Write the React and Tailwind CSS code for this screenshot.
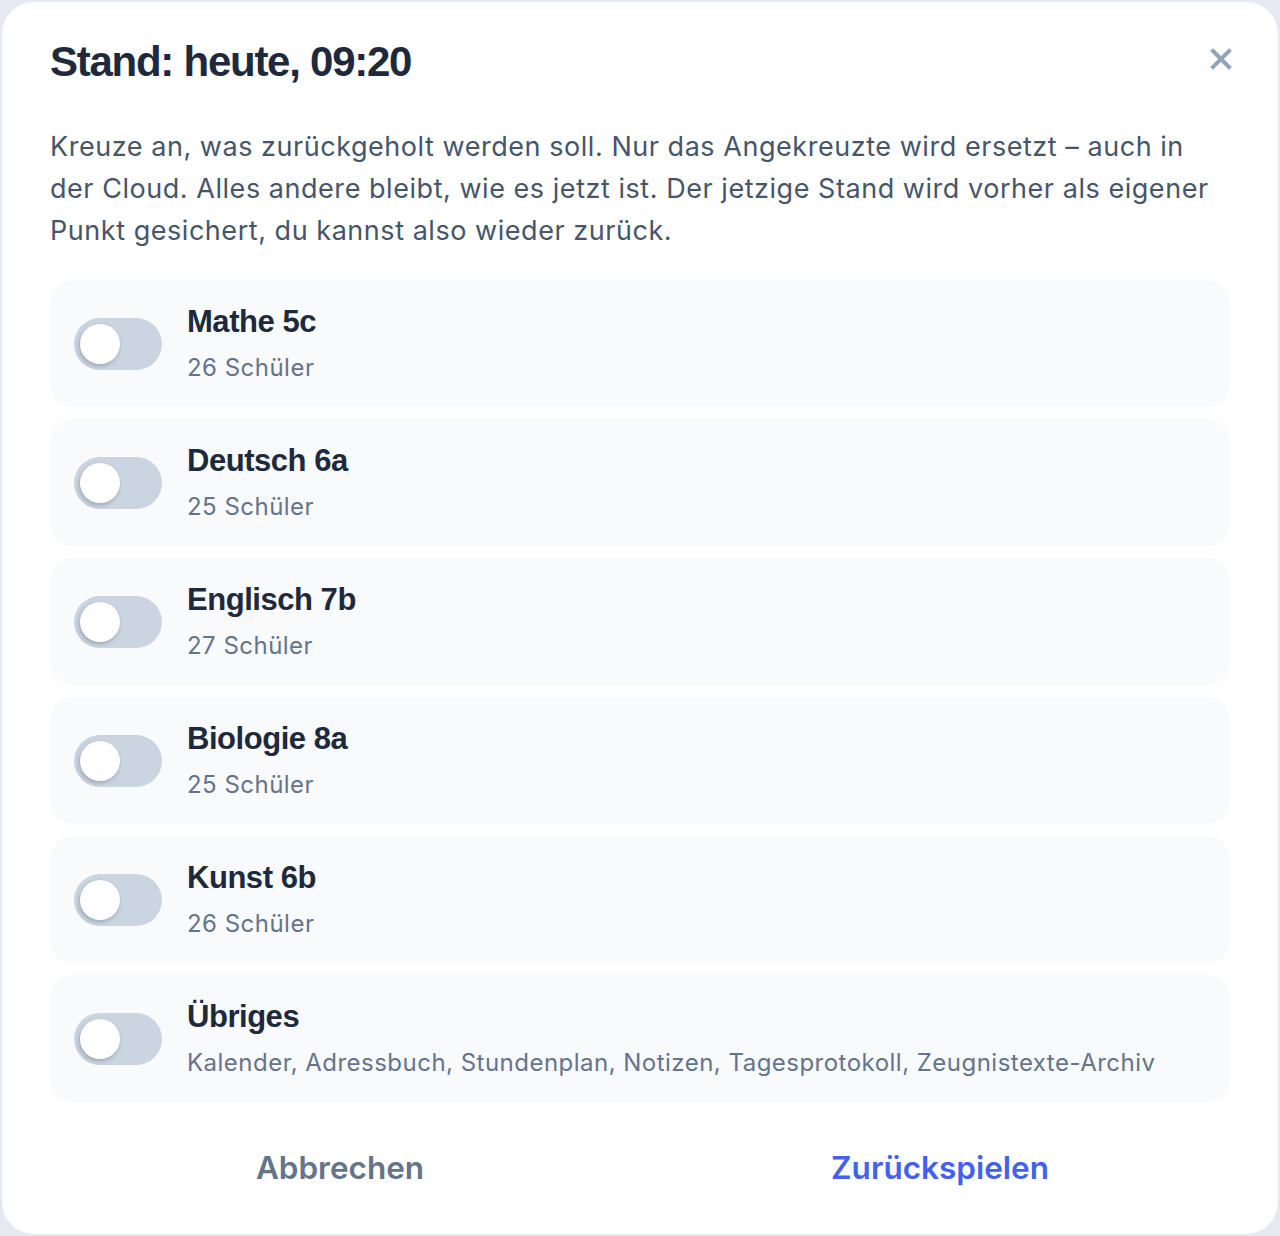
import React from 'react';

const rows = [
  { name: 'Mathe 5c', sub: '26 Schüler' },
  { name: 'Deutsch 6a', sub: '25 Schüler' },
  { name: 'Englisch 7b', sub: '27 Schüler' },
  { name: 'Biologie 8a', sub: '25 Schüler' },
  { name: 'Kunst 6b', sub: '26 Schüler' },
  { name: 'Übriges', sub: 'Kalender, Adressbuch, Stundenplan, Notizen, Tagesprotokoll, Zeugnistexte-Archiv' },
];

function Toggle() {
  return (
    <div className="flex h-[52px] w-[88px] shrink-0 items-center rounded-full bg-[#cbd5e1] px-[6px]">
      <div className="h-[40px] w-[40px] rounded-full bg-white shadow-[-1px_2px_4px_rgba(15,23,42,0.25)]" />
    </div>
  );
}

export default function App() {
  return (
    <div className="h-[1236px] w-full bg-[#e6e9f1] p-[2px] font-['Inter',sans-serif]">
      <div className="flex h-full flex-col rounded-[32px] bg-white px-[48px]">
        <div className="flex items-start justify-between pt-[34px]">
          <h2 className="font-['Liberation_Sans',Arial,sans-serif] text-[42px] font-bold leading-[52px] tracking-[-0.03em] text-[#1e293b]">
            Stand: heute, 09:20
          </h2>
          <button type="button" className="mt-[12px] -mr-[2px] text-[#94a3b8]">
            <svg width="22" height="22" viewBox="0 0 22 22" fill="none" stroke="currentColor" strokeWidth="4" strokeLinecap="square">
              <path d="M3 3l16 16M19 3L3 19" />
            </svg>
          </button>
        </div>

        <p className="mt-[38px] pr-[10px] text-[27px] leading-[42px] tracking-[0.02em] text-[#475569]">
          Kreuze an, was zurückgeholt werden soll. Nur das Angekreuzte wird ersetzt – auch in der Cloud. Alles andere bleibt, wie es jetzt ist. Der jetzige Stand wird vorher als eigener Punkt gesichert, du kannst also wieder zurück.
        </p>

        <div className="mt-[28px] flex flex-col gap-[12px]">
          {rows.map((r) => (
            <div key={r.name} className="flex h-[127px] items-center gap-[25px] rounded-[22px] bg-[#f8fafc] px-[24px]">
              <Toggle />
              <div className="min-w-0">
                <p className="font-['Liberation_Sans',Arial,sans-serif] text-[31px] font-bold leading-[38px] tracking-[-0.015em] text-[#1e293b]">
                  {r.name}
                </p>
                <p className="mt-[11px] text-[24px] leading-[32px] tracking-[0.02em] text-[#64748b]">{r.sub}</p>
              </div>
            </div>
          ))}
        </div>

        <div className="grid flex-1 grid-cols-2 gap-[20px]">
          <button type="button" className="text-[31.5px] font-semibold text-[#64748b]">Abbrechen</button>
          <button type="button" className="text-[31.5px] font-semibold text-[#4361ee]">Zurückspielen</button>
        </div>
      </div>
    </div>
  );
}
